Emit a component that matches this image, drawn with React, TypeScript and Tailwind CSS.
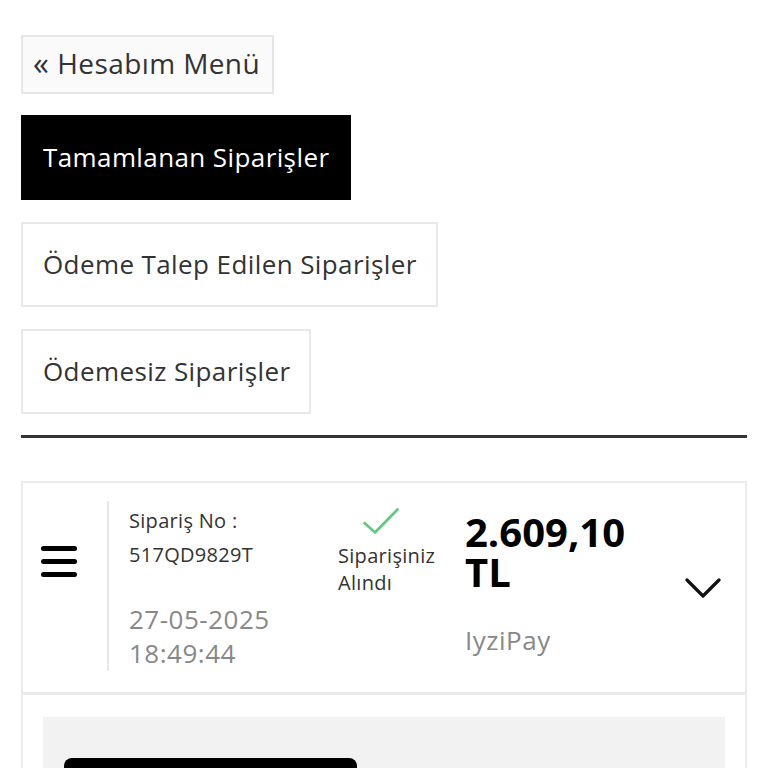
const tabs = [
  { label: "Tamamlanan Siparişler", active: true, width: "w-[330px]" },
  { label: "Ödeme Talep Edilen Siparişler", active: false, width: "w-[417px]" },
  { label: "Ödemesiz Siparişler", active: false, width: "w-[290px]" },
];

const Hamburger = () => (
  <div className="flex flex-col gap-[8px] w-[36px]">
    <span className="block h-[5px] rounded-full bg-black" />
    <span className="block h-[5px] rounded-full bg-black" />
    <span className="block h-[5px] rounded-full bg-black" />
  </div>
);

const App = () => {
  return (
    <div
      className="min-h-screen bg-white px-[21px] pt-[35px] text-[#333]"
      style={{ fontFamily: '"Open Sans", "Noto Sans", sans-serif' }}
    >
      <button className="flex h-[59px] w-[253px] items-center border-2 border-[#e6e6e6] bg-[#fafafa] pb-[3px] pl-[10px] text-[28px] tracking-[0.4px] text-[#333]">
        <span className="mr-[8px] text-[32px] leading-none">«</span>
        Hesabım Menü
      </button>

      <div className="mt-[21px] flex flex-col gap-[22px]">
        {tabs.map((tab) => (
          <button
            key={tab.label}
            className={
              tab.active
                ? `flex h-[85px] ${tab.width} items-center bg-black pl-[22px] text-[26px] tracking-[0.4px] text-white`
                : `flex h-[85px] ${tab.width} items-center border-2 border-[#e8e8e8] bg-white pl-[20px] text-[26px] tracking-[0.4px] text-[#333]`
            }
          >
            {tab.label}
          </button>
        ))}
      </div>

      <div className="mt-[21px] h-[3px] bg-[#333]" />

      <div className="mt-[43px] flex h-[214px] border-2 border-b-[3px] border-[#ebebeb]">
        <div className="w-[84px] pl-[18px] pt-[63px]">
          <Hamburger />
        </div>
        <div className="mt-[18px] h-[170px] w-[2px] bg-[#e8e8e8]" />
        <div className="flex w-[229px] flex-col pl-[20px] pt-[21px]">
          <p className="text-[20px] leading-[34px] tracking-[0.3px] text-[#333]">Sipariş No :</p>
          <p className="text-[20px] leading-[34px] tracking-[0.3px] text-[#333]">517QD9829T</p>
          <p className="mt-[30px] text-[26px] leading-[34px] tracking-[0.5px] text-[#888]">27-05-2025</p>
          <p className="text-[26px] leading-[34px] tracking-[0.5px] text-[#888]">18:49:44</p>
        </div>
        <div className="flex w-[127px] flex-col pt-[25px]">
          <svg
            viewBox="0 0 36 26"
            className="ml-[25px] h-[26px] w-[36px]"
            fill="none"
            stroke="#5ccb7b"
            strokeWidth="2.6"
            strokeLinecap="round"
            strokeLinejoin="round"
          >
            <path d="M1.5 15 L12 24.5 L34.5 1.5" />
          </svg>
          <p className="mt-[8px] text-[20px] leading-[27px] tracking-[0.3px] text-[#333]">
            Siparişiniz
            <br />
            Alındı
          </p>
        </div>
        <div className="flex flex-1 flex-col pt-[29px]">
          <p className="text-[40px] font-bold leading-[40px] text-black">2.609,10</p>
          <p className="text-[40px] font-bold leading-[40px] text-black">TL</p>
          <p className="mt-[31px] text-[26px] leading-[34px] tracking-[0.5px] text-[#888]">IyziPay</p>
        </div>
        <div className="pr-[24px] pt-[95px]">
          <svg
            viewBox="0 0 36 20"
            className="h-[20px] w-[36px]"
            fill="none"
            stroke="#111"
            strokeWidth="3.2"
            strokeLinecap="round"
            strokeLinejoin="round"
          >
            <path d="M2 2 L18 18 L34 2" />
          </svg>
        </div>
      </div>

      <div className="border-x-2 border-[#ebebeb] px-[20px] pt-[22px]">
        <div className="bg-[#f2f2f2] px-[21px] pt-[41px] pb-[20px]">
          <button className="h-[50px] w-[293px] rounded-[8px] bg-black" />
        </div>
      </div>
    </div>
  );
};

export default App;
